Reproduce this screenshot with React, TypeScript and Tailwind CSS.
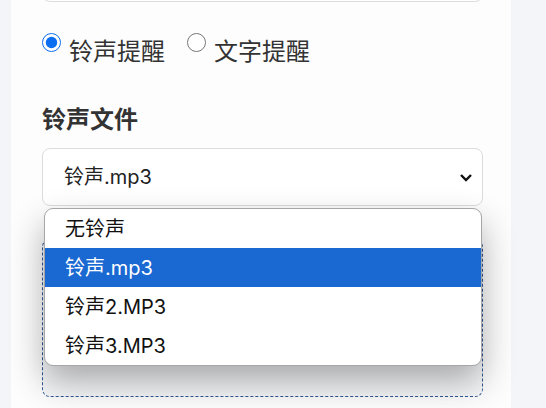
import { useState } from "react";

const options = ["无铃声", "铃声.mp3", "铃声2.MP3", "铃声3.MP3"];

const font = "font-['Inter','Noto_Sans_CJK_SC',sans-serif]";

const RingtoneSettings = () => {
 const [mode, setMode] = useState("ring");
 const [selected, setSelected] = useState(1);

 return (
  <div className={`flex h-[408px] w-[546px] overflow-hidden bg-[#f3f5f9] text-[#222] ${font}`}>
   <div className="w-[11px] shrink-0" />
   <div className="w-[500px] shrink-0 bg-[#fdfdfe] pl-[31px] pr-[28px]">
    {/* bottom edge of the field above */}
    <div className="-mt-[42px] h-[44px] rounded-lg border border-[#dcdcdc] bg-white" />

    <div className="mt-[33px] flex items-start">
     <label className="flex items-start">
      <input
       type="radio"
       name="remind"
       checked={mode === "ring"}
       onChange={() => setMode("ring")}
       className="-mt-[2px] m-0 h-[19px] w-[19px] accent-[#0b6ef0]"
      />
      <span className="ml-[8px] text-[24px] leading-[34px] text-[#333]">铃声提醒</span>
     </label>
     <label className="ml-[22px] flex items-start">
      <input
       type="radio"
       name="remind"
       checked={mode === "text"}
       onChange={() => setMode("text")}
       className="-mt-[2px] m-0 h-[19px] w-[19px] accent-[#0b6ef0]"
      />
      <span className="ml-[8px] text-[24px] leading-[34px] text-[#333]">文字提醒</span>
     </label>
    </div>

    <div className="mt-[35px] text-[24px] font-bold leading-[32px] text-[#333]">铃声文件</div>

    <div className="relative mt-[12px]">
     <div className="flex h-[58px] items-center justify-between rounded-lg border border-[#dcdcdc] bg-white pl-[21px] pr-[9px]">
      <span className="text-[20px]">{options[selected]}</span>
      <svg width="14" height="9" viewBox="0 0 14 9" className="mt-[1px]">
       <path d="M2 2l5 5 5-5" fill="none" stroke="#111" strokeWidth="2.4" />
      </svg>
     </div>

     <ul className="absolute left-[2px] top-[60px] z-10 w-[438px] overflow-hidden rounded-[9px] border border-[#a6a6a6] bg-white shadow-[0_16px_34px_rgba(0,0,0,0.32)]">
      {options.map((opt, i) => (
       <li
        key={opt}
        onClick={() => setSelected(i)}
        className={
         i === selected
          ? "flex h-[39px] items-center bg-[#1a68d1] pl-[20px] text-[20px] text-white"
          : "flex h-[39px] items-center pl-[20px] text-[20px] text-[#111]"
        }
       >
        {opt}
       </li>
      ))}
     </ul>

     <div className="mt-[33px] h-[158px] rounded-lg border border-dashed border-[#2f5797] bg-[#f7f8fa]" />
    </div>
   </div>
  </div>
 );
};

export default function App() {
 return <RingtoneSettings />;
}
